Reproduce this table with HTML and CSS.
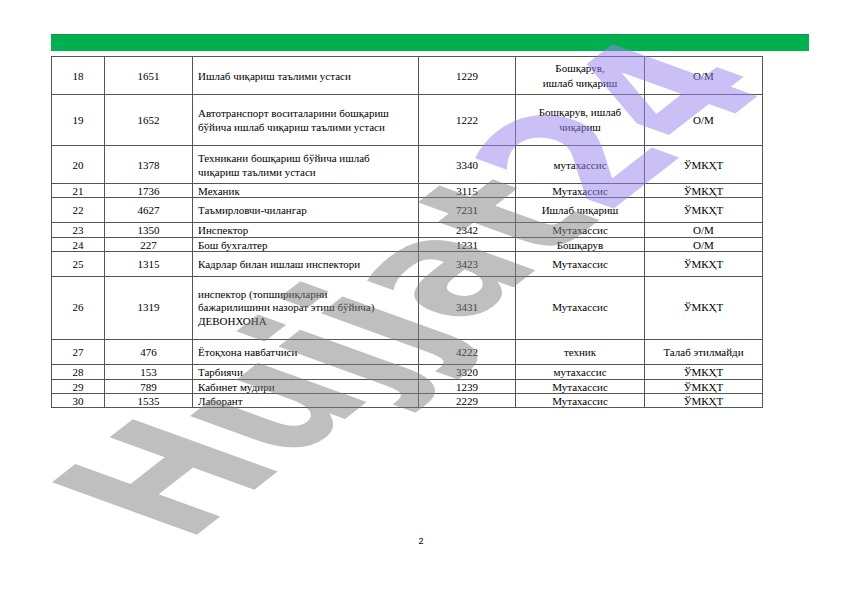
FILE: index.html
```html
<!DOCTYPE html>
<html lang="uz">
<head>
<meta charset="utf-8">
<title>Hujjat</title>
<link rel="stylesheet" href="styles.css">
</head>
<body>
<div class="page">
  <div class="green-bar"></div>
  <table class="grid">
    <colgroup>
      <col class="c1"><col class="c2"><col class="c3"><col class="c4"><col class="c5"><col class="c6">
    </colgroup>
    <tbody>
      <tr class="h38"><td>18</td><td>1651</td><td class="txt">Ишлаб чиқариш таълими устаси</td><td>1229</td><td class="two">Бошқарув,<br>ишлаб чиқариш</td><td>О/М</td></tr>
      <tr class="h51"><td>19</td><td>1652</td><td class="txt">Автотранспорт воситаларини бошқариш<br>бўйича ишлаб чиқариш таълими устаси</td><td>1222</td><td class="two">Бошқарув, ишлаб<br>чиқариш</td><td>О/М</td></tr>
      <tr class="h38"><td>20</td><td>1378</td><td class="txt">Техникани бошқариш бўйича ишлаб<br>чиқариш таълими устаси</td><td>3340</td><td>мутахассис</td><td>ЎМКҲТ</td></tr>
      <tr class="h14"><td>21</td><td>1736</td><td class="txt">Механик</td><td>3115</td><td>Мутахассис</td><td>ЎМКҲТ</td></tr>
      <tr class="h25"><td>22</td><td>4627</td><td class="txt">Таъмирловчи-чилангар</td><td>7231</td><td>Ишлаб чиқариш</td><td>ЎМКҲТ</td></tr>
      <tr class="h15"><td>23</td><td>1350</td><td class="txt">Инспектор</td><td>2342</td><td>Мутахассис</td><td>О/М</td></tr>
      <tr class="h14"><td>24</td><td>227</td><td class="txt">Бош бухгалтер</td><td>1231</td><td>Бошқарув</td><td>О/М</td></tr>
      <tr class="h25"><td>25</td><td>1315</td><td class="txt">Кадрлар билан ишлаш инспектори</td><td>3423</td><td>Мутахассис</td><td>ЎМКҲТ</td></tr>
      <tr class="h63"><td>26</td><td>1319</td><td class="txt">инспектор (топшириқларни<br>бажарилишини назорат этиш бўйича)<br>ДЕВОНХОНА</td><td>3431</td><td>Мутахассис</td><td>ЎМКҲТ</td></tr>
      <tr class="h25"><td>27</td><td>476</td><td class="txt">Ётоқхона навбатчиси</td><td>4222</td><td>техник</td><td>Талаб этилмайди</td></tr>
      <tr class="h15"><td>28</td><td>153</td><td class="txt">Тарбиячи</td><td>3320</td><td>мутахассис</td><td>ЎМКҲТ</td></tr>
      <tr class="h14"><td>29</td><td>789</td><td class="txt">Кабинет мудири</td><td>1239</td><td>Мутахассис</td><td>ЎМКҲТ</td></tr>
      <tr class="h14"><td>30</td><td>1535</td><td class="txt">Лаборант</td><td>2229</td><td>Мутахассис</td><td>ЎМКҲТ</td></tr>
    </tbody>
  </table>
  <div class="page-num">2</div>
</div>
<div class="watermark" aria-hidden="true"><span class="wm-gray">Hujjat</span><span class="wm-purple">24</span></div>
</body>
</html>
```

FILE: styles.css
```css
html, body {
  margin: 0;
  padding: 0;
  background: #ffffff;
}

body {
  width: 842px;
  height: 596px;
  overflow: hidden;
  position: relative;
  font-family: "Liberation Serif", "Times New Roman", serif;
  color: #000;
}

.page {
  padding: 34px 0 0 51px;
  display: flex;
  flex-direction: column;
  align-items: flex-start;
}

.green-bar {
  width: 758px;
  height: 16px;
  background: #00b04f;
  border-top: 1px solid #13924a;
  margin-bottom: 5px;
}

.grid {
  border-collapse: collapse;
  table-layout: fixed;
  width: 711px;
  font-family: "Liberation Serif", "Times New Roman", serif;
  font-weight: normal;
  font-size: 11px;
  line-height: 14px;
}

.c1 { width: 53px; }
.c2 { width: 88px; }
.c3 { width: 226px; }
.c4 { width: 97px; }
.c5 { width: 129px; }
.c6 { width: 118px; }

.grid td {
  border: 1px solid #555555;
  padding: 0 2px;
  text-align: center;
  vertical-align: middle;
  white-space: nowrap;
  overflow: hidden;
}

.grid td.txt {
  text-align: left;
  padding-left: 5px;
}

.grid td.two { line-height: 15px; }

.h14 td, .h15 td { line-height: 12px; }
.h14 td { height: 13px; }
.h15 td { height: 14px; }
.h25 td { height: 24px; }
.h38 td { height: 37px; }
.h51 td { height: 50px; }
.h63 td { height: 62px; line-height: 13.5px; }

.page-num {
  align-self: stretch;
  margin-left: -51px;
  margin-top: 128px;
  text-align: center;
  font-family: "Liberation Sans", Arial, sans-serif;
  font-size: 9px;
  line-height: 10px;
}

.watermark {
  position: absolute;
  left: 18px;
  top: 483px;
  transform-origin: 0 0;
  transform: matrix(0.772, -0.604, 1.241, 0.449, 0, 0);
  font-family: "DejaVu Sans", "Liberation Sans", sans-serif;
  font-weight: bold;
  font-size: 160px;
  line-height: 1;
  white-space: nowrap;
  pointer-events: none;
}

.wm-gray { color: rgba(128, 128, 128, 0.5); }
.wm-purple { color: rgba(150, 130, 235, 0.5); }
```
